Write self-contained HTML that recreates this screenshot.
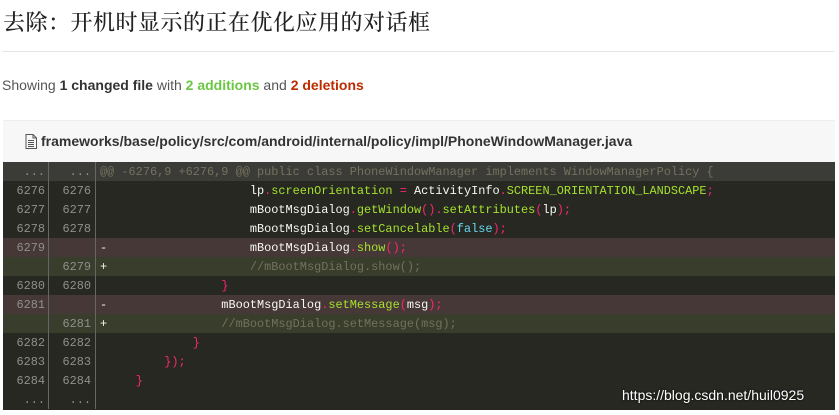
<!DOCTYPE html>
<html><head><meta charset="utf-8"><style>
body{margin:0;width:839px;height:415px;background:#fff;overflow:hidden;font-family:"Liberation Sans","Noto Sans CJK SC",sans-serif;}
h1{position:absolute;left:3px;top:6px;margin:0;font:500 22px "Liberation Serif","Noto Serif CJK SC",serif;color:#222;letter-spacing:0.5px}
.hr{position:absolute;left:2px;top:51px;width:833px;height:1px;background:#e5e5e5}
.show{position:absolute;left:2px;top:77px;font-size:14px;color:#555}
.show b{color:#333}.g{color:#6cc644;font-weight:bold}.r{color:#bd2c00;font-weight:bold}
.fh{position:absolute;left:3px;top:120px;width:832px;height:41px;background:#f7f7f7;border-top:1px solid #eee}
.fh span{position:absolute;left:38px;top:12px;font-size:14px;font-weight:bold;color:#333}
.code{position:absolute;left:3px;top:162px;width:832px;height:248px;background:#272822;font:11.9px "Liberation Mono",monospace}
.row{height:19px;line-height:20px;position:relative;white-space:pre;color:#f8f8f2}
.n1,.n2{position:absolute;top:0;width:42px;text-align:right;color:#8f908a;height:19px}
.n1{left:0}.n2{left:46px}
.n1:after,.n2:after{content:"";position:absolute;right:-4px;top:0;width:1px;height:19px;background:#666}
.n2:after{right:-5px}
.c{position:absolute;left:97px;top:0}
.hd{background:#3b3c37}.hd .c{color:#75715e}
.del{background:#473838}.add{background:#383d2c}
.y{color:#a6e22e}.p{color:#f92672}.bl{color:#66d9ef}.cm{color:#75715e}
</style></head><body>
<h1>去除：开机时显示的正在优化应用的对话框</h1>
<div class="hr"></div>
<div class="show">Showing <b>1 changed file</b> with <span class="g">2 additions</span> and <span class="r">2 deletions</span></div>
<div class="fh"><svg style="position:absolute;left:22px;top:13px" width="12" height="15" viewBox="0 0 12 15"><path d="M1 .5h7l3.5 3.5v10.5h-10.5z M8 .5v3.5h3.5 M3 6.5h6 M3 8.5h6 M3 10.5h6 M3 12.5h6" fill="none" stroke="#555"/></svg><span>frameworks/base/policy/src/com/android/internal/policy/impl/PhoneWindowManager.java</span></div>
<div class="code">
<div class="row hd"><span class="n1">...</span><span class="n2">...</span><span class="c">@@ -6276,9 +6276,9 @@ public class PhoneWindowManager implements WindowManagerPolicy {</span></div>
<div class="row"><span class="n1">6276</span><span class="n2">6276</span><span class="c">                     lp<span class="p">.</span><span class="y">screenOrientation</span> <span class="p">=</span> ActivityInfo<span class="p">.</span><span class="y">SCREEN_ORIENTATION_LANDSCAPE</span><span class="p">;</span></span></div>
<div class="row"><span class="n1">6277</span><span class="n2">6277</span><span class="c">                     mBootMsgDialog<span class="p">.</span><span class="y">getWindow</span><span class="p">()</span><span class="p">.</span><span class="y">setAttributes</span><span class="p">(</span>lp<span class="p">);</span></span></div>
<div class="row"><span class="n1">6278</span><span class="n2">6278</span><span class="c">                     mBootMsgDialog<span class="p">.</span><span class="y">setCancelable</span><span class="p">(</span><span class="bl">false</span><span class="p">);</span></span></div>
<div class="row del"><span class="n1">6279</span><span class="n2"></span><span class="c">-                    mBootMsgDialog<span class="p">.</span><span class="y">show</span><span class="p">();</span></span></div>
<div class="row add"><span class="n1"></span><span class="n2">6279</span><span class="c">+                    <span class="cm">//mBootMsgDialog.show();</span></span></div>
<div class="row"><span class="n1">6280</span><span class="n2">6280</span><span class="c">                 <span class="p">}</span></span></div>
<div class="row del"><span class="n1">6281</span><span class="n2"></span><span class="c">-                mBootMsgDialog<span class="p">.</span><span class="y">setMessage</span><span class="p">(</span>msg<span class="p">);</span></span></div>
<div class="row add"><span class="n1"></span><span class="n2">6281</span><span class="c">+                <span class="cm">//mBootMsgDialog.setMessage(msg);</span></span></div>
<div class="row"><span class="n1">6282</span><span class="n2">6282</span><span class="c">             <span class="p">}</span></span></div>
<div class="row"><span class="n1">6283</span><span class="n2">6283</span><span class="c">         <span class="p">});</span></span></div>
<div class="row"><span class="n1">6284</span><span class="n2">6284</span><span class="c">     <span class="p">}</span></span></div>
<div class="row" style="height:20px"><span class="n1" style="height:20px">...</span><span class="n2" style="height:20px">...</span></div>
</div>
<div style="position:absolute;left:622px;top:387px;font-size:14px;color:#fff;text-shadow:0 0 2px #000">https://blog.csdn.net/huil0925</div>
</body></html>
